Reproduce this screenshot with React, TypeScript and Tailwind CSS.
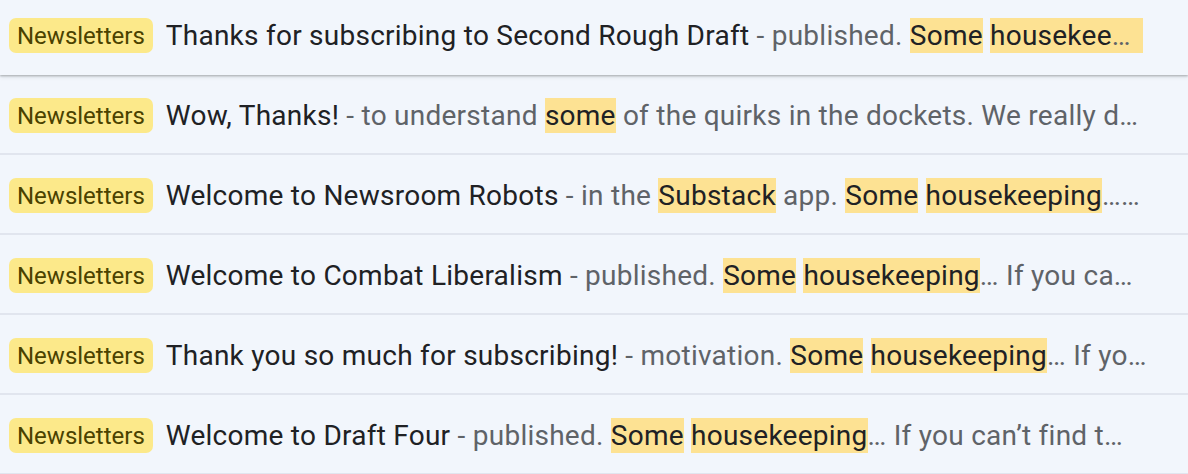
import React from 'react';

type Part = { text: string; hl?: boolean; tail?: string };

interface Row {
  subject: string;
  snippet: Part[];
}

const rows: Row[] = [
  {
    subject: 'Thanks for subscribing to Second Rough Draft',
    snippet: [
      { text: 'published. ' },
      { text: 'Some', hl: true },
      { text: ' ' },
      { text: 'housekee', hl: true, tail: '…' },
    ],
  },
  {
    subject: 'Wow, Thanks!',
    snippet: [
      { text: 'to understand ' },
      { text: 'some', hl: true },
      { text: ' of the quirks in the dockets. We really d…' },
    ],
  },
  {
    subject: 'Welcome to Newsroom Robots',
    snippet: [
      { text: 'in the ' },
      { text: 'Substack', hl: true },
      { text: ' app. ' },
      { text: 'Some', hl: true },
      { text: ' ' },
      { text: 'housekeeping', hl: true },
      { text: '……' },
    ],
  },
  {
    subject: 'Welcome to Combat Liberalism',
    snippet: [
      { text: 'published. ' },
      { text: 'Some', hl: true },
      { text: ' ' },
      { text: 'housekeeping', hl: true },
      { text: '… If you ca…' },
    ],
  },
  {
    subject: 'Thank you so much for subscribing!',
    snippet: [
      { text: 'motivation. ' },
      { text: 'Some', hl: true },
      { text: ' ' },
      { text: 'housekeeping', hl: true },
      { text: '… If yo…' },
    ],
  },
  {
    subject: 'Welcome to Draft Four',
    snippet: [
      { text: 'published. ' },
      { text: 'Some', hl: true },
      { text: ' ' },
      { text: 'housekeeping', hl: true },
      { text: '… If you can’t find t…' },
    ],
  },
];

const MailRow: React.FC<{ row: Row; first?: boolean }> = ({ row, first }) => (
  <div
    className={
      first
        ? 'relative z-10 flex h-[80px] items-center pl-[9px] pt-[1px] shadow-[0_1px_2px_rgba(60,64,67,0.35),0_2px_4px_rgba(60,64,67,0.12)]'
        : 'flex h-[80px] items-center border-b-2 border-[#e1e5ee] pl-[9px] pt-[3px]'
    }
  >
    <span className="flex h-[35px] shrink-0 items-center rounded-[7px] bg-[#fce98a] px-[8px] text-[24px] text-[#4a4200]">
      Newsletters
    </span>
    <div className="ml-[13px] whitespace-nowrap text-[28px] tracking-[0.25px]">
      <span className="text-[#202124]">{row.subject}</span>
      <span className="text-[#5f6368]"> - </span>
      {row.snippet.map((p, i) =>
        p.hl ? (
          <span key={i} className="bg-[#fde293] py-[1px] text-[#202124]">
            {p.text}
            {p.tail && <span className="pr-[12px] text-[#5f6368]">{p.tail}</span>}
          </span>
        ) : (
          <span key={i} className="text-[#5f6368]">
            {p.text}
          </span>
        )
      )}
    </div>
  </div>
);

export default function App() {
  return (
    <div className="h-[474px] w-[1188px] overflow-hidden bg-[#f2f6fc] font-['Roboto',sans-serif]">
      <div className="-mt-[5px]">
        {rows.map((r, i) => (
          <MailRow key={i} row={r} first={i === 0} />
        ))}
      </div>
    </div>
  );
}
